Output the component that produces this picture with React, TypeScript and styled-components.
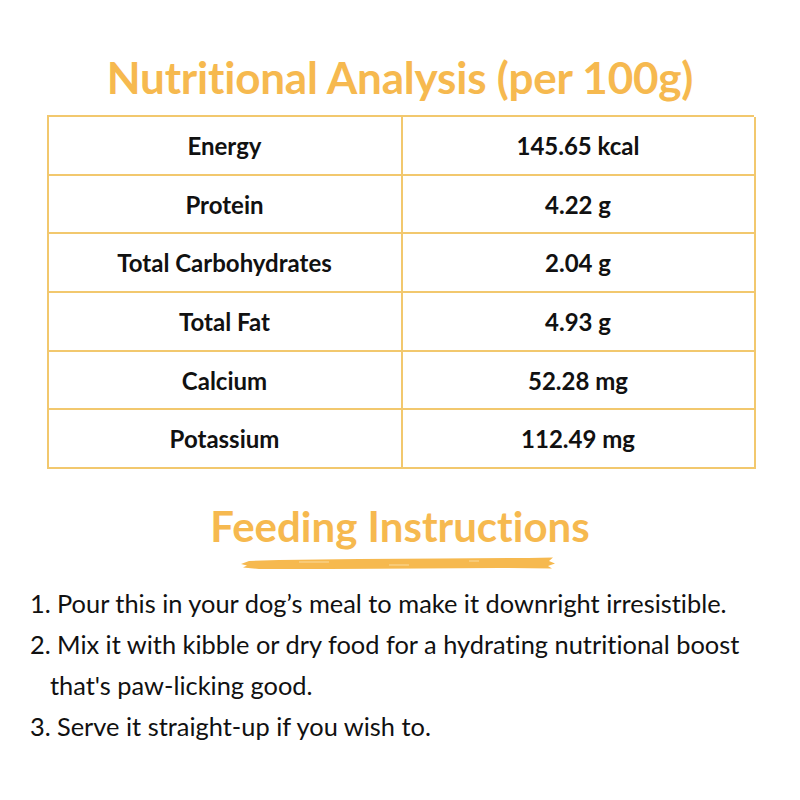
import React from "react";
import styled, { createGlobalStyle } from "styled-components";

const Global = createGlobalStyle`
  html, body { margin: 0; padding: 0; background: #fff; }
  body { width: 800px; height: 800px; overflow: hidden; }
`;

const Page = styled.div`
  width: 800px;
  height: 800px;
  box-sizing: border-box;
  padding-top: 50px;
  display: flex;
  flex-direction: column;
  align-items: center;
  font-family: Lato, sans-serif;
  font-variant-ligatures: none;
`;

const Title = styled.h1`
  margin: 0;
  font-family: Lato, sans-serif;
  font-weight: 700;
  font-size: 44px;
  line-height: 54px;
  color: #f6b94f;
  letter-spacing: -0.2px;
`;

const Table = styled.div`
  margin-top: 11px;
  width: 707px;
  display: grid;
  grid-template-columns: 354px 353px;
  border-top: 2px solid #f2c86e;
  border-left: 2px solid #f2c86e;
  box-sizing: border-box;
`;

const Cell = styled.div`
  height: 58.7px;
  box-sizing: border-box;
  border-right: 2px solid #f2c86e;
  border-bottom: 2px solid #f2c86e;
  display: flex;
  align-items: center;
  justify-content: center;
  font-family: Lato, sans-serif;
  font-weight: 700;
  font-size: 24px;
  color: #111;
`;

const SubTitle = styled.h2`
  margin: 32px 0 0;
  font-family: Lato, sans-serif;
  font-weight: 700;
  font-size: 42px;
  line-height: 50px;
  color: #f6b94f;
`;

const Stroke = styled.svg`
  display: block;
  margin-top: 5px;
  margin-left: -5px;
`;

const List = styled.ol`
  align-self: stretch;
  margin: 12px 0 0;
  padding: 0 0 0 30px;
  list-style: none;
  font-family: Lato, sans-serif;
  font-size: 25.4px;
  line-height: 41px;
  color: #111;
`;

const Item = styled.li`
  display: flex;
`;

const Num = styled.span`
  width: 20px;
  flex: none;
`;

const Text = styled.span`
  display: block;
  text-indent: 7px;
`;

const rows: [string, string][] = [
  ["Energy", "145.65 kcal"],
  ["Protein", "4.22 g"],
  ["Total Carbohydrates", "2.04 g"],
  ["Total Fat", "4.93 g"],
  ["Calcium", "52.28 mg"],
  ["Potassium", "112.49 mg"],
];

export default function App() {
  return (
    <>
      <Global />
      <Page>
        <Title>Nutritional Analysis (per 100g)</Title>
        <Table>
          {rows.map(([k, v]) => (
            <React.Fragment key={k}>
              <Cell>{k}</Cell>
              <Cell>{v}</Cell>
            </React.Fragment>
          ))}
        </Table>
        <SubTitle>Feeding Instructions</SubTitle>
        <Stroke width="318" height="15" viewBox="0 0 318 15">
          <path
            d="M2 8 L10 5 L40 4 L120 3 L200 2.5 L290 2 L314 1.5 L310 5 L316 7.5 L309 10 L313 12.5 L260 12 L180 12.5 L90 13 L20 13 L4 11.5 L8 9.5 Z"
            fill="#f6b94f"
          />
          <path d="M60 6 L90 6 M150 9 L170 9 M230 5 L240 5" stroke="#fce3b3" strokeWidth="0.8" />
        </Stroke>
        <List>
          <Item><Num>1.</Num><Text>Pour this in your dog’s meal to make it downright irresistible.</Text></Item>
          <Item><Num>2.</Num><Text>Mix it with kibble or dry food for a hydrating nutritional boost<br />that's paw-licking good.</Text></Item>
          <Item><Num>3.</Num><Text>Serve it straight-up if you wish to.</Text></Item>
        </List>
      </Page>
    </>
  );
}
